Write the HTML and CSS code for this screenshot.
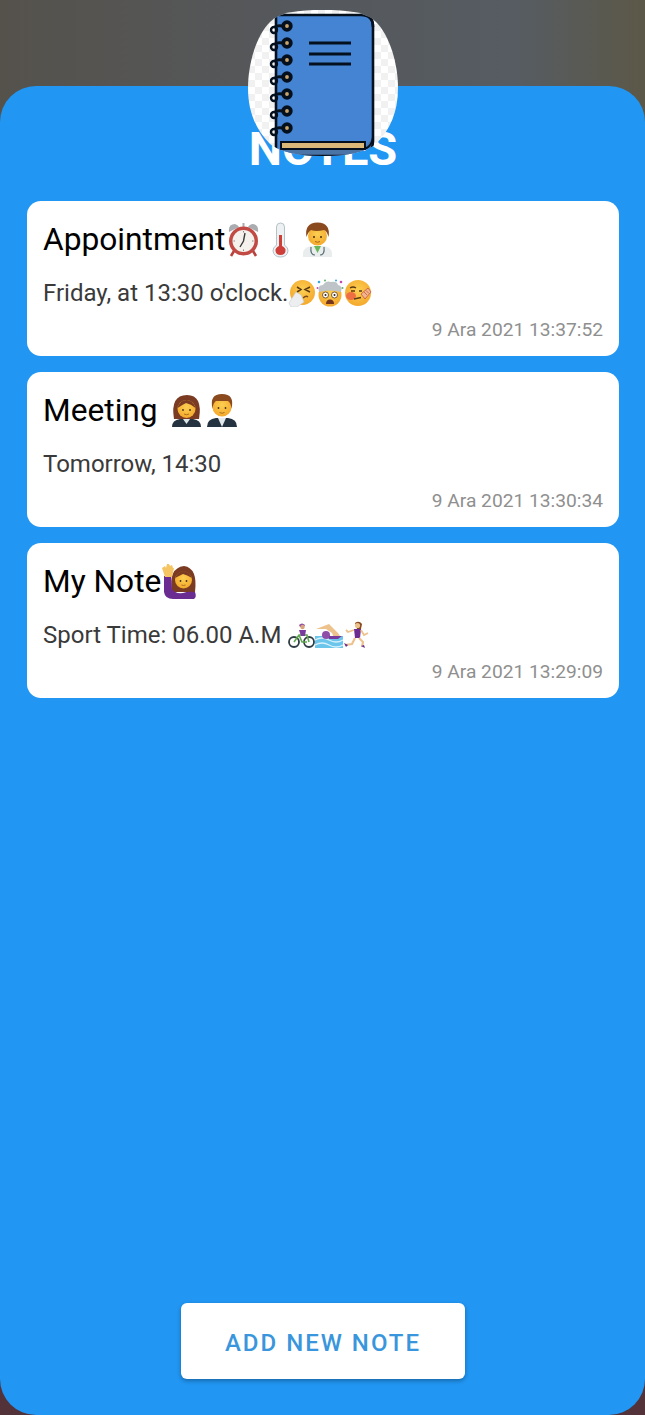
FILE: index.html
```html
<!DOCTYPE html>
<html lang="en">
<head>
  <meta charset="UTF-8">
  <title>Notes</title>
  <link rel="stylesheet" href="styles.css">
</head>
<body>
  <div class="screen">
    <main class="sheet">
      <h1 class="page-title">NOTES</h1>
      <div class="note-list">
        <div class="note">
          <div class="note-title">Appointment<svg class="emoji big" viewBox="0 0 37 37"><path d="M4 11Q3 3 10 3Q13 4 14 6ZM33 11Q34 3 27 3Q24 4 23 6Z" fill="#a9adb0"/><path d="M18.500 2V6" stroke="#a9adb0" stroke-width="2"/><path d="M9 30L6 35M28 30L31 35" stroke="#b8433c" stroke-width="2.600"/><circle cx="18.500" cy="20" r="14.500" fill="#c24a44"/><circle cx="18.500" cy="20" r="11" fill="#f5f2ee"/><path d="M20 12L18.500 20L15 26" fill="none" stroke="#3b3b3b" stroke-width="1.400"/><path d="M18.500 10V11.500M18.500 28.500V30M8.500 20H10M27 20H28.500" stroke="#888" stroke-width="1"/></svg><svg class="emoji big" viewBox="0 0 37 37"><path d="M14.500 24V6Q14.500 2 18.500 2Q22.500 2 22.500 6V24Q26.500 27 26 30Q25 36 18.500 36Q12 36 11 30Q10.500 27 14.500 24Z" fill="#eef1f2" stroke="#b4c2c9" stroke-width="1"/><path d="M17 14H20V25Q24 27 23.500 30Q23 34 18.500 34Q14 34 13.500 30Q13 27 17 25Z" fill="#cf3f3a"/></svg><svg class="emoji big" viewBox="0 0 37 37"><path d="M4 36V32Q4 27 12 25H25Q33 27 33 32V36Z" fill="#e9edee"/><path d="M15 25L18.500 32L22 25Z" fill="#67b65a"/><path d="M12 26Q11 34 16 34M25 26Q26 34 21 34" fill="none" stroke="#5c7079" stroke-width="1.200"/><circle cx="18.500" cy="15" r="9.500" fill="url(#face)"/><circle cx="15" cy="16" r="1" fill="#4a2f14"/><circle cx="22" cy="16" r="1" fill="#4a2f14"/><path d="M16 20.500Q18.500 22 21 20.500" fill="none" stroke="#a5651c" stroke-width="1"/><path d="M7.500 16Q5 2 18.500 1.500Q32 2 29.500 16Q28 10 25 9Q17 11 12 9Q9 11 7.500 16Z" fill="#8a4a1e"/></svg></div>
          <div class="note-body">Friday, at 13:30 o'clock.<svg class="emoji" viewBox="0 0 28 28"><circle cx="14.500" cy="13.500" r="12.500" fill="url(#face)"/><path d="M9 8L13 10.500L9 13M22 8L17 10.500L22 13" fill="none" stroke="#5b3a16" stroke-width="1.500"/><path d="M15 19Q18 16 20 18" fill="none" stroke="#7b4a1c" stroke-width="1.300"/><path d="M1 24L8 13L13 16L16 23L9 28L3 28Z" fill="#eceef0" stroke="#c7ccd0" stroke-width=".6"/></svg><svg class="emoji" viewBox="0 0 28 28"><circle cx="14" cy="16" r="11.500" fill="url(#face)"/><path d="M3 13Q1 6 7 6Q10 1 15 3Q21 2 22 6Q27 7 25 13Q14 10 3 13Z" fill="#bec4c8"/><circle cx="3" cy="3" r="1.300" fill="#3aa6dc"/><circle cx="25" cy="3" r="1.300" fill="#c64bb0"/><circle cx="9" cy="1.500" r="1" fill="#58b368"/><circle cx="20" cy="1.500" r="1" fill="#3aa6dc"/><circle cx="1.500" cy="9" r="1" fill="#c64bb0"/><circle cx="26.500" cy="9" r="1" fill="#58b368"/><circle cx="9.500" cy="16" r="3" fill="#fff" stroke="#5b3a16" stroke-width=".8"/><circle cx="18.500" cy="16" r="3" fill="#fff" stroke="#5b3a16" stroke-width=".8"/><circle cx="9.500" cy="16" r="1" fill="#33210e"/><circle cx="18.500" cy="16" r="1" fill="#33210e"/><path d="M10 25Q10 20.500 14 20.500Q18 20.500 18 25Z" fill="#74361c"/></svg><svg class="emoji" viewBox="0 0 28 28"><circle cx="14" cy="14" r="13" fill="url(#face)"/><ellipse cx="7" cy="17" rx="5" ry="4" fill="#ee6f43"/><path d="M6 9Q9 7 12 9M7 12H11M15 12H18M10 20L17 18.500" fill="none" stroke="#5b3a16" stroke-width="1.400"/><path d="M17 15L24 9L27 13L21 20Z" fill="#f0b48e" stroke="#c9583e" stroke-width=".8"/><path d="M20 13L23 16M22 11.500L25 14.500" stroke="#c9583e" stroke-width=".8"/></svg></div>
          <div class="note-date">9 Ara 2021 13:37:52</div>
        </div>
        <div class="note">
          <div class="note-title">Meeting <svg class="emoji big" viewBox="0 0 37 37"><path d="M8 27Q4 3 21 3Q37 3 33 27Z" fill="#7a3b22"/><circle cx="20.500" cy="17" r="9" fill="url(#face)"/><path d="M11.500 16Q14 8 20.500 8Q27 8 29.500 16Q25 12 20 11Q16 13 11.500 16Z" fill="#7a3b22"/><circle cx="17" cy="18" r=".9" fill="#4a2f14"/><circle cx="24" cy="18" r=".9" fill="#4a2f14"/><path d="M18 22Q20.500 23.500 23 22" fill="none" stroke="#a5651c" stroke-width=".9"/><path d="M6 35Q6 28 14 27H27Q35 28 35 35Z" fill="#24333f"/><path d="M17 27L20.500 32L24 27Z" fill="#dfe6ea"/></svg><svg class="emoji big" viewBox="0 0 37 37"><circle cx="19" cy="15" r="9.500" fill="url(#face)"/><path d="M9.500 17Q6 2 19 2Q32 2 28.500 17Q28 11 25 9H13Q10 11 9.500 17Z" fill="#8a4a1e"/><circle cx="15.500" cy="16" r=".9" fill="#4a2f14"/><circle cx="22.500" cy="16" r=".9" fill="#4a2f14"/><path d="M16.500 20.500Q19 22 21.500 20.500" fill="none" stroke="#a5651c" stroke-width=".9"/><path d="M4 35Q4 27 13 26H25Q34 27 34 35Z" fill="#24333f"/><path d="M15 26L19 35L23 26Z" fill="#e4eaed"/></svg></div>
          <div class="note-body">Tomorrow, 14:30</div>
          <div class="note-date">9 Ara 2021 13:30:34</div>
        </div>
        <div class="note">
          <div class="note-title">My Note<svg class="emoji big" viewBox="0 0 37 37"><path d="M11 29Q7 5 23 3Q37 5 34 29Z" fill="#7a3b22"/><circle cx="22.500" cy="17" r="8.500" fill="url(#face)"/><path d="M14 15Q17 8 22.500 8Q28 8 31 15Q26 12 22 11Q18 13 14 15Z" fill="#7a3b22"/><circle cx="19.500" cy="18" r=".9" fill="#4a2f14"/><circle cx="25.500" cy="18" r=".9" fill="#4a2f14"/><path d="M20.500 22Q22.500 23 24.500 22" fill="none" stroke="#a5651c" stroke-width=".9"/><path d="M3 13L3 29Q4 36 12 36H33Q36 34 34 29Q27 28 22 30Q14 31 11 26L10 13Z" fill="#6a2c91"/><path d="M1 5L4 3L5 5L6 1L8 1L9 3L11 2L12 5L13 5L11 14L4 14Z" fill="#f5c463"/></svg></div>
          <div class="note-body">Sport Time: 06.00 A.M <svg class="emoji" viewBox="0 0 28 28"><circle cx="7" cy="21" r="5" fill="none" stroke="#2f3c44" stroke-width="1.800"/><circle cx="22" cy="21" r="5" fill="none" stroke="#2f3c44" stroke-width="1.800"/><path d="M7 21L12 14H20L22 21M12 14L15 21H20" fill="none" stroke="#5fa94e" stroke-width="1.600"/><path d="M12 4Q15 1 18 4L17 6H13Z" fill="#8f4fa8"/><circle cx="15.500" cy="6" r="2.200" fill="#d9a37c"/><path d="M12 9H19L18 15H14Z" fill="#7b3a9e"/></svg><svg class="emoji" viewBox="0 0 28 28"><rect y="15" width="28" height="12" fill="#6cc6ec"/><path d="M0 19Q7 15 14 19T28 19M0 24Q7 20 14 24T28 24" fill="none" stroke="#d8f1fb" stroke-width="1.300"/><path d="M1 8L14 3L23 12L25 15L19 17L17 12L11 8Z" fill="#eec28c"/><circle cx="11" cy="14" r="4" fill="#8f4fa8"/><path d="M14 15H27L23 18H14Z" fill="#7b3a9e"/></svg><svg class="emoji" viewBox="0 0 28 28"><path d="M12 2Q16 -1 19 3L18 8H14Z" fill="#8a4a1e"/><circle cx="14.500" cy="4.500" r="2.600" fill="#eec28c"/><path d="M11 8H18L17 17H12Z" fill="#6a2c91"/><path d="M11 9L5 11L3 9M18 9L21 14L25 12" fill="none" stroke="#eec28c" stroke-width="1.800"/><path d="M12 17L9 23L2 24M16 17L20 21L19 26" fill="none" stroke="#eec28c" stroke-width="2.200"/><path d="M1 22L3 26L5 24M18 25L22 27L21 24" fill="#6a2c91"/></svg></div>
          <div class="note-date">9 Ara 2021 13:29:09</div>
        </div>
      </div>
      <button class="add-btn">ADD NEW NOTE</button>
    </main>
    <svg class="logo" viewBox="0 0 150 146" aria-hidden="true">
      <defs>
        <radialGradient id="face" cx="50%" cy="40%" r="60%">
          <stop offset="0" stop-color="#fccf52"/>
          <stop offset="1" stop-color="#f4a92c"/>
        </radialGradient>
        <pattern id="checks" width="14" height="14" patternUnits="userSpaceOnUse">
          <rect width="14" height="14" fill="#fff"/>
          <rect width="7" height="7" fill="#f1f1f1"/>
          <rect x="7" y="7" width="7" height="7" fill="#f1f1f1"/>
        </pattern>
        <clipPath id="squircle">
          <path d="M75 0C100 0 118 2 128 12C142 26 150 54 150 78C150 102 142 120 128 134C118 142 100 146 75 146C50 146 32 142 22 134C8 120 0 102 0 78C0 54 8 26 22 12C32 2 50 0 75 0Z"/>
        </clipPath>
      </defs>
      <g clip-path="url(#squircle)">
        <rect width="150" height="146" fill="url(#checks)"/>
        <path d="M28 5H113Q125 5 125 17V131Q125 146 110 146H28Z" fill="#4584d2"/>
        <path d="M28 139H116L125 127V133Q125 146 110 146H28Z" fill="#4a73a6"/>
        <path d="M28 5H113Q125 5 125 17V131Q125 146 110 146H28Z" fill="none" stroke="#05101f" stroke-width="2.600"/>
        <path d="M120 5Q125 8 125 17" fill="none" stroke="#05101f" stroke-width="2.600"/>
        <rect x="33" y="132" width="84" height="7" fill="#dcb878" stroke="#05101f" stroke-width="2"/>
        <path d="M117 139Q124 136 125 127" fill="none" stroke="#05101f" stroke-width="2"/>
        <path d="M61 33H103M61 44H103M61 54H103" stroke="#05101f" stroke-width="2.800"/>
        <g id="ring">
          <path d="M35 16Q29 15 27 17" fill="none" stroke="#05101f" stroke-width="3"/>
          <circle cx="26" cy="20" r="3" fill="none" stroke="#05101f" stroke-width="2.400"/>
          <circle cx="39" cy="16" r="3.800" fill="#c9a26a" stroke="#05101f" stroke-width="3.800"/>
        </g>
        <use href="#ring" y="17"/>
        <use href="#ring" y="34"/>
        <use href="#ring" y="51"/>
        <use href="#ring" y="68"/>
        <use href="#ring" y="85"/>
        <use href="#ring" y="102"/>
      </g>
    </svg>
  </div>
</body>
</html>
```

FILE: styles.css
```css
html, body {
  margin: 0;
  height: 100%;
}
body {
  font-family: Roboto, Arial, sans-serif;
  background-color: #2196f3;
}
.screen {
  position: relative;
  display: flex;
  flex-direction: column;
  width: 645px;
  height: 1415px;
  padding-top: 86px;
  box-sizing: border-box;
  overflow: hidden;
  background:
    linear-gradient(#53323a, #53323a) bottom / 100% 100px no-repeat,
    linear-gradient(90deg, #55524c 0%, #55585c 45%, #565c62 80%, #5c5848 100%);
}
.logo {
  position: absolute;
  left: 248px;
  top: 10px;
  width: 150px;
  height: 146px;
}
.sheet {
  flex: 1;
  display: flex;
  flex-direction: column;
  align-items: center;
  padding: 38px 26px 36px 27px;
  background-color: #2196f3;
  border-radius: 36px;
}
.page-title {
  margin: 0 0 30px;
  height: 47px;
  line-height: 50px;
  font-size: 47px;
  font-weight: 700;
  color: #fff;
}
.note-list {
  flex: 1;
  display: flex;
  flex-direction: column;
  gap: 16px;
  align-self: stretch;
}
.note {
  height: 155px;
  padding: 16px 16px 0;
  box-sizing: border-box;
  background-color: #fff;
  border-radius: 14px;
}
.note-title {
  display: flex;
  align-items: center;
  height: 44px;
  font-size: 31.7px;
  color: #000;
  white-space: pre;
}
.note-body {
  display: flex;
  align-items: center;
  height: 32px;
  margin-top: 16px;
  font-size: 24px;
  color: #3a3a3a;
  white-space: pre;
}
.note-date {
  margin-top: 9px;
  font-size: 19.2px;
  line-height: 24px;
  text-align: right;
  color: #8f8f8f;
}
.emoji {
  flex: none;
  width: 28px;
  height: 28px;
}
.emoji.big {
  width: 37px;
  height: 37px;
}
.add-btn {
  width: 284px;
  height: 76px;
  padding: 4px 0 0;
  font-family: Roboto, Arial, sans-serif;
  font-size: 24px;
  font-weight: 500;
  letter-spacing: 2px;
  color: #3a96dc;
  background-color: #fff;
  border: none;
  border-radius: 6px;
  box-shadow: 0 2px 4px rgba(0, 0, 0, 0.3);
}
```
